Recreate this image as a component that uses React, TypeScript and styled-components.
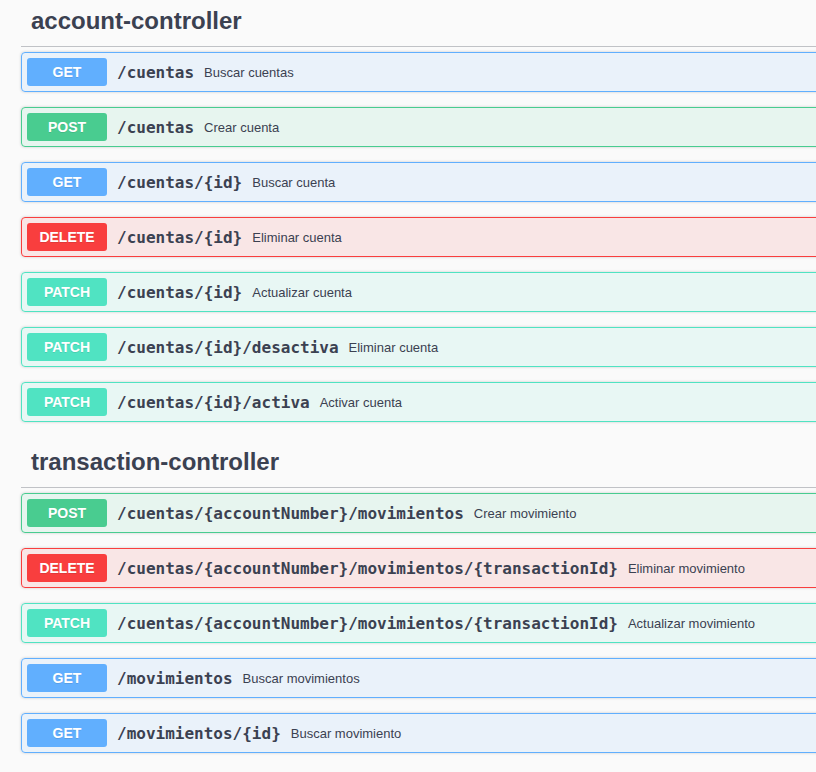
import React from "react";
import styled, { createGlobalStyle } from "styled-components";

type Method = "GET" | "POST" | "DELETE" | "PATCH";

const COLORS: Record<Method, { main: string; bg: string }> = {
  GET: { main: "#61affe", bg: "rgba(97,175,254,.1)" },
  POST: { main: "#49cc90", bg: "rgba(73,204,144,.1)" },
  DELETE: { main: "#f93e3e", bg: "rgba(249,62,62,.1)" },
  PATCH: { main: "#50e3c2", bg: "rgba(80,227,194,.1)" },
};

const Global = createGlobalStyle`
  html, body { margin: 0; padding: 0; background: #fafafa; overflow: hidden; }
  body { font-family: "Liberation Sans", Arial, sans-serif; color: #3b4151; }
`;

const Page = styled.div`
  width: 1000px;
  margin-top: -4px;
  padding-left: 21px;
  display: flex;
  flex-direction: column;
`;

const Section = styled.section`
  display: flex;
  flex-direction: column;
`;

const TagHeading = styled.h3`
  margin: 0 0 5px;
  height: 50px;
  padding: 0 20px 0 10px;
  display: flex;
  align-items: center;
  font-family: "Liberation Sans", Arial, sans-serif;
  font-size: 24px;
  font-weight: 700;
  color: #3b4151;
  border-bottom: 1px solid rgba(59, 65, 81, 0.3);
`;

const Block = styled.div<{ $method: Method }>`
  margin: 0 0 15px;
  border: 1px solid ${(p) => COLORS[p.$method].main};
  background: ${(p) => COLORS[p.$method].bg};
  border-radius: 4px;
  box-shadow: 0 0 3px rgba(0, 0, 0, 0.19);
`;

const Summary = styled.div`
  display: flex;
  align-items: center;
  padding: 5px;
`;

const Badge = styled.span<{ $method: Method }>`
  min-width: 80px;
  padding: 6px 0;
  text-align: center;
  border-radius: 3px;
  background: ${(p) => COLORS[p.$method].main};
  color: #fff;
  font-family: "Liberation Sans", Arial, sans-serif;
  font-size: 14px;
  font-weight: 700;
  line-height: 16px;
  text-shadow: 0 1px 0 rgba(0, 0, 0, 0.1);
`;

const Path = styled.span`
  padding: 0 10px;
  font-family: "DejaVu Sans Mono", monospace;
  font-size: 16px;
  font-weight: 700;
  color: #3b4151;
  white-space: nowrap;
`;

const Desc = styled.span`
  font-family: "Liberation Sans", Arial, sans-serif;
  font-size: 13px;
  color: #3b4151;
`;

type Op = { method: Method; path: string; desc: string };

const sections: { tag: string; ops: Op[] }[] = [
  {
    tag: "account-controller",
    ops: [
      { method: "GET", path: "/cuentas", desc: "Buscar cuentas" },
      { method: "POST", path: "/cuentas", desc: "Crear cuenta" },
      { method: "GET", path: "/cuentas/{id}", desc: "Buscar cuenta" },
      { method: "DELETE", path: "/cuentas/{id}", desc: "Eliminar cuenta" },
      { method: "PATCH", path: "/cuentas/{id}", desc: "Actualizar cuenta" },
      { method: "PATCH", path: "/cuentas/{id}/desactiva", desc: "Eliminar cuenta" },
      { method: "PATCH", path: "/cuentas/{id}/activa", desc: "Activar cuenta" },
    ],
  },
  {
    tag: "transaction-controller",
    ops: [
      { method: "POST", path: "/cuentas/{accountNumber}/movimientos", desc: "Crear movimiento" },
      {
        method: "DELETE",
        path: "/cuentas/{accountNumber}/movimientos/{transactionId}",
        desc: "Eliminar movimiento",
      },
      {
        method: "PATCH",
        path: "/cuentas/{accountNumber}/movimientos/{transactionId}",
        desc: "Actualizar movimiento",
      },
      { method: "GET", path: "/movimientos", desc: "Buscar movimientos" },
      { method: "GET", path: "/movimientos/{id}", desc: "Buscar movimiento" },
    ],
  },
];

export default function App() {
  return (
    <>
      <Global />
      <Page>
        {sections.map((s) => (
          <Section key={s.tag}>
            <TagHeading>{s.tag}</TagHeading>
            {s.ops.map((o, i) => (
              <Block key={i} $method={o.method}>
                <Summary>
                  <Badge $method={o.method}>{o.method}</Badge>
                  <Path>{o.path}</Path>
                  <Desc>{o.desc}</Desc>
                </Summary>
              </Block>
            ))}
          </Section>
        ))}
      </Page>
    </>
  );
}
